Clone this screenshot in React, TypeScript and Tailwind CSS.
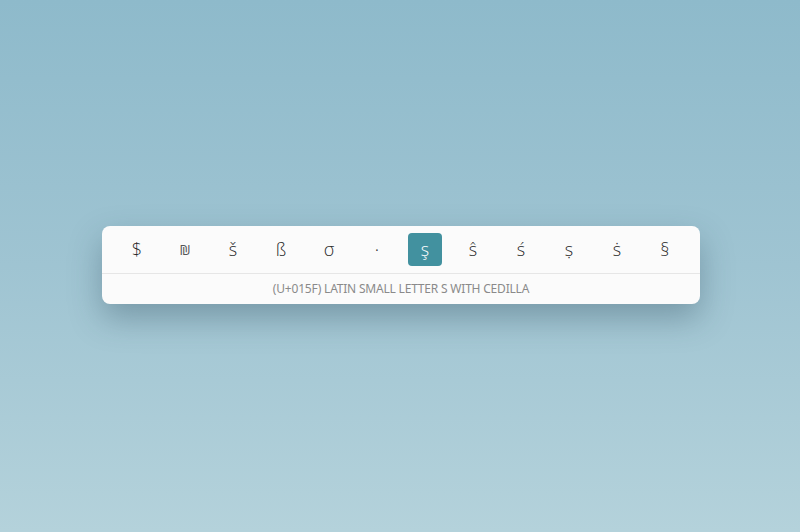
const chars = ['$', '₪', 'š', 'ß', 'σ', '·', 'ş', 'ŝ', 'ś', 'ṣ', 'ṡ', '§'];
const selected = 6;

export default function App() {
  return (
    <div className="w-[800px] h-[532px] bg-gradient-to-b from-[#8ebacb] via-[#9fc4d2] to-[#b4d2db] flex flex-col items-center pt-[226px] pl-[2px] font-['Noto_Sans','Open_Sans',sans-serif]">
      <div className="w-[598px] rounded-lg bg-[#fbfbfb] shadow-[0_14px_32px_rgba(40,70,85,0.35)] overflow-hidden">
        {/* character strip */}
        <div className="h-[48px] px-[11px] flex items-center border-b border-[#e6e6e6]">
          {chars.map((c, i) => (
            <div key={i} className="w-12 flex justify-center">
              <div
                className={
                  i === selected
                    ? "w-[34px] h-[33px] rounded bg-[#42919f] text-white flex items-center justify-center text-[18px] font-light font-['Open_Sans',sans-serif]"
                    : i === 1
                      ? "w-[34px] h-[33px] flex items-center justify-center text-[14px] text-[#555] font-['Open_Sans',sans-serif]"
                      : "w-[34px] h-[33px] flex items-center justify-center text-[18px] font-light text-[#2a2a2a] font-['Open_Sans',sans-serif]"
                }
              >
                {c}
              </div>
            </div>
          ))}
        </div>
        {/* caption */}
        <div className="h-[30px] flex items-center justify-center text-[12px] text-[#8a8a8a] tracking-[-0.2px]">
          (U+015F) LATIN SMALL LETTER S WITH CEDILLA
        </div>
      </div>
    </div>
  );
}
